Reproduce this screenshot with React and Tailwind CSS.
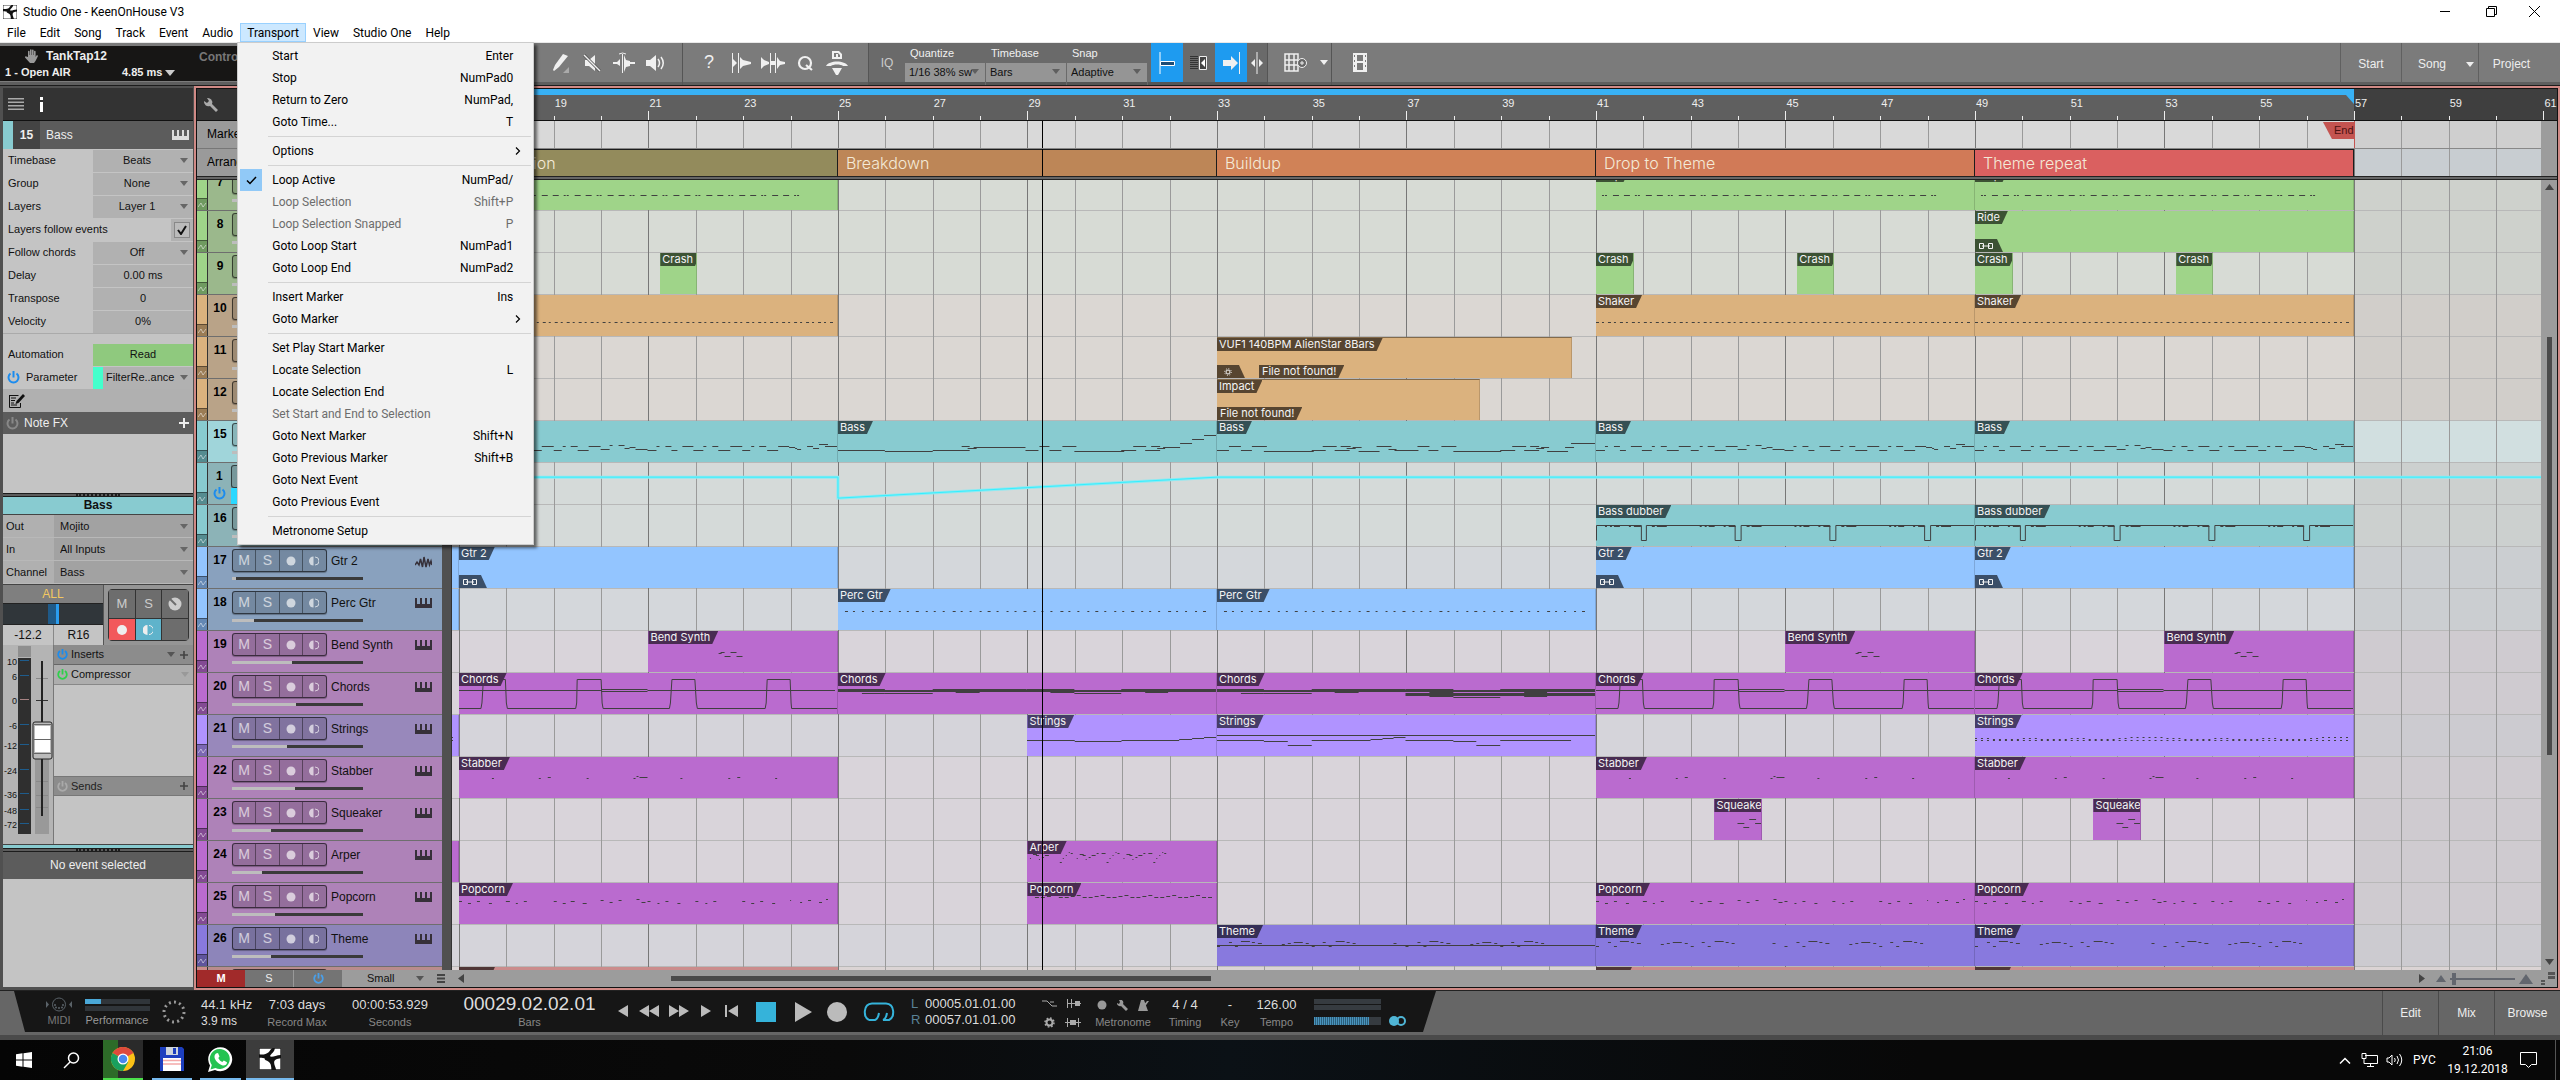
import { Fragment } from "react";
import clsx from "clsx";

const FIRST_BAR = 16.853;
const SPAN = 44.095;
const BARS = Array.from({ length: 44 }, (_, i) => i + 17);

const at = (bar) => `${((bar - FIRST_BAR) / SPAN) * 100}%`;
const wide = (bars) => `${(bars / SPAN) * 100}%`;

const MENUS = ["File", "Edit", "Song", "Track", "Event", "Audio", "Transport", "View", "Studio One", "Help"];

const TRANSPORT_MENU = [
  [
    { label: "Start", keys: "Enter" },
    { label: "Stop", keys: "NumPad0" },
    { label: "Return to Zero", keys: "NumPad," },
    { label: "Goto Time...", keys: "T" },
  ],
  [{ label: "Options", sub: true }],
  [
    { label: "Loop Active", keys: "NumPad/", checked: true },
    { label: "Loop Selection", keys: "Shift+P", disabled: true },
    { label: "Loop Selection Snapped", keys: "P", disabled: true },
    { label: "Goto Loop Start", keys: "NumPad1" },
    { label: "Goto Loop End", keys: "NumPad2" },
  ],
  [{ label: "Insert Marker", keys: "Ins" }, { label: "Goto Marker", sub: true }],
  [
    { label: "Set Play Start Marker" },
    { label: "Locate Selection", keys: "L" },
    { label: "Locate Selection End" },
    { label: "Set Start and End to Selection", disabled: true },
    { label: "Goto Next Marker", keys: "Shift+N" },
    { label: "Goto Previous Marker", keys: "Shift+B" },
    { label: "Goto Next Event" },
    { label: "Goto Previous Event" },
  ],
  [{ label: "Metronome Setup" }],
];

const THEMES = {
  green: { strip: "bg-[#9fd489]", auto: "bg-[#6f9a60]", head: "bg-[#9bb88c]", lane: "bg-[#d7dbd5]", tag: "bg-[#3c5234]" },
  orange: { strip: "bg-[#dbb27e]", auto: "bg-[#9b7c55]", head: "bg-[#b9a388]", lane: "bg-[#dbd7d3]", tag: "bg-[#574530]" },
  teal: { strip: "bg-[#88cbd0]", auto: "bg-[#558c90]", head: "bg-[#8cb3b7]", lane: "bg-[#d5dad9]", tag: "bg-[#355054]" },
  tealOn: { strip: "bg-[#88cbd0]", auto: "bg-[#558c90]", head: "bg-[#a0d5da]", lane: "bg-[#dcebeb]", tag: "bg-[#355054]" },
  blue: { strip: "bg-[#93c5ff]", auto: "bg-[#6488b4]", head: "bg-[#89a1be]", lane: "bg-[#d4d7db]", tag: "bg-[#3b4f68]" },
  purple: { strip: "bg-[#ba6bcf]", auto: "bg-[#834a93]", head: "bg-[#ae82b8]", lane: "bg-[#d9d4da]", tag: "bg-[#492c52]" },
  violet: { strip: "bg-[#b093ff]", auto: "bg-[#7b67b3]", head: "bg-[#9888bb]", lane: "bg-[#d5d4da]", tag: "bg-[#463c68]" },
  indigo: { strip: "bg-[#8879de]", auto: "bg-[#5f559c]", head: "bg-[#8d85ba]", lane: "bg-[#d5d4da]", tag: "bg-[#352f57]" },
  red: { strip: "bg-[#cb8c8c]", auto: "bg-[#8f6161]", head: "bg-[#b98c8c]", lane: "bg-[#dbd4d4]", tag: "bg-[#503636]" },
};

// notes are [x, y, length] in clip units, 379 units for eight bars
const path = (notes) => notes.map(([x, y, w]) => `M${x} ${y + 0.5}h${w}`).join("");
const shift = (notes, dx) => notes.map(([x, y, w]) => [x + dx, y, w]);

const bassRiff = [
  [0, 29, 9], [9, 25, 3], [18, 25, 6], [24, 29, 6], [35, 25, 11], [46, 29, 10], [56, 25, 3], [65, 25, 6], [71, 29, 12],
  [83, 25, 12], [95, 29, 8], [104, 25, 3], [112, 25, 7],
];
const bassVerse = path([
  ...bassRiff, [119, 29, 11], [130, 25, 12], [142, 28, 9], [151, 24, 3], [160, 24, 6], [166, 27, 5], [171, 26, 6], [177, 28, 12],
  ...shift(bassRiff, 189), [309, 29, 11], [320, 25, 11], [331, 26, 6], [337, 27, 2], [339, 28, 4], [349, 25, 6], [355, 27, 6],
  [361, 23, 9], [367, 25, 12],
]);
const bassBreak = path([
  [0, 29, 47], [47, 30, 48], [95, 29, 37], [124, 25, 8], [130, 27, 9], [136, 26, 52], [188, 29, 13], [202, 25, 10], [212, 29, 12],
  [225, 25, 14], [237, 30, 50], [284, 29, 15], [296, 25, 13], [308, 29, 15], [314, 25, 9], [320, 27, 8], [326, 26, 17],
  [343, 22, 12], [355, 18, 12], [367, 14, 12],
]);
const bassBuild = path([
  [0, 29, 12], [12, 25, 12], [24, 29, 11], [35, 25, 15], [47, 30, 50], [95, 29, 14], [106, 25, 14], [118, 29, 15], [124, 25, 10],
  [130, 27, 9], [136, 26, 9], [142, 30, 21], [160, 25, 15], [172, 28, 8], [178, 29, 24], [201, 25, 12], [212, 29, 10],
  [225, 25, 15], [237, 30, 48], [284, 29, 15], [296, 25, 14], [308, 29, 15], [314, 25, 9], [320, 27, 8], [325, 26, 8],
  [331, 30, 21], [349, 26, 9], [355, 22, 24],
]);
const dubber =
  "M.5 35.5V20.5H45.5V35.5H50.5V20.5H139.5V35.5H145.5V20.5H234.5V35.5H240.5V20.5H329.5V35.5H335.5V20.5H379" +
  path([0, 95, 190, 285].flatMap((x) => [[x + 9, 21, 2], [x + 14, 21, 2], [x + 18, 21, 6], [x + 33, 21, 2], [x + 38, 21, 7], [x + 56, 21, 3], [x + 61, 21, 10]]));
const bend = path([[71, 22, 3], [73, 21, 4], [77, 25, 6], [83, 21, 6], [89, 25, 6]]);
const chordsVerse =
  "M0 35.5H22L23 30L24.5 6.5H46.5L47.5 30L48.5 35.5H117L118 30L118.5 6.5H142.5L143.5 30L144.5 35.5H211L212 30L213.5 6.5H236.5L238 30L239 35.5H307L308 30L309 6.5H332L333 30L333.5 35.5H379" +
  path([[0, 17, 143], [143, 16, 46], [143, 18, 46], [189, 17, 188]]);
const chordsBreak = path([
  [0, 16, 47], [0, 17, 379], [0, 18, 379], [24, 20, 23], [47, 18, 48], [47, 20, 48], [95, 16, 94], [118, 19, 24],
  [189, 16, 48], [213, 19, 24], [237, 20, 47], [237, 18, 47], [284, 16, 95], [308, 19, 23],
]);
const chordsBuild = chordsBreak + path([[189, 20, 190], [189, 21, 190], [189, 22, 190], [213, 23, 24], [237, 24, 47], [308, 23, 23]]);
const stringsA = path([[0, 25, 48], [48, 26, 47], [95, 25, 58], [153, 24, 13], [166, 23, 12], [178, 22, 12]]);
const stringsB = path([
  [0, 20, 379], [0, 25, 47], [47, 26, 24], [71, 30, 24], [95, 25, 59], [154, 24, 12], [166, 23, 11], [177, 22, 12],
  [189, 25, 48], [237, 26, 23], [260, 30, 24], [284, 25, 71],
]);
const stringsC = path(
  Array.from({ length: 63 }, (_, i) => [i * 6, 25, 2]).concat(
    Array.from({ length: 63 }, (_, i) => [i * 6, i % 32 > 25 ? 22 : i % 8 < 3 ? 23 : 24, 2])
  )
);
const stabber = path([
  [33, 21, 2], [80, 21, 2], [89, 20, 3], [128, 21, 2], [175, 21, 2], [178, 19, 2], [181, 20, 8], [222, 21, 2], [270, 21, 2],
  [279, 20, 3], [317, 21, 2],
]);
const squeaker = path([[24, 24, 7], [30, 28, 6], [36, 20, 7], [42, 24, 6]]);
const arper = path(
  [0, 47, 94].flatMap((x) => [
    [x + 3, 17, 1], [x + 6, 13, 4], [x + 9, 14, 3], [x + 12, 18, 1], [x + 15, 16, 2], [x + 18, 14, 4], [x + 23, 12, 2],
    [x + 28, 12, 4], [x + 33, 21, 2], [x + 36, 17, 1], [x + 39, 14, 1], [x + 42, 11, 1], [x + 44, 12, 2],
  ])
);
const popcornA = path([
  [0, 18, 3], [9, 20, 3], [18, 18, 3], [30, 20, 3], [47, 18, 4], [57, 20, 2], [65, 18, 3], [95, 18, 3], [104, 20, 3],
  [112, 18, 4], [124, 20, 4], [142, 17, 3], [151, 19, 3], [160, 17, 3], [178, 16, 3], [183, 19, 4], [189, 18, 3],
  [199, 20, 2], [207, 18, 3], [219, 20, 3], [237, 18, 3], [247, 20, 2], [255, 18, 3], [284, 18, 3], [293, 20, 3],
  [302, 18, 3], [314, 20, 3], [332, 17, 1], [342, 19, 2], [350, 17, 3], [361, 19, 3], [368, 16, 2],
]);
const popcornB = path(Array.from({ length: 31 }, (_, i) => [i * 6 + 2, 12 + ((i * 3) % 4 > 1 ? 2 : i % 2), 4]));
const themeRiff = [
  [0, 21, 3], [12, 17, 3], [18, 21, 3], [24, 16, 9], [35, 17, 3], [41, 18, 4], [65, 19, 3], [71, 18, 3], [77, 17, 9], [89, 18, 3],
  [95, 21, 3], [106, 17, 3], [112, 21, 3], [119, 16, 9], [130, 17, 3], [136, 18, 3],
];
const theme = path([...themeRiff, [177, 18, 3], ...shift(themeRiff, 189)]);
const themeHeld = theme + "M0 20.5H379";
const hats = path(Array.from({ length: 31 }, (_, i) => (i % 3 ? [[i * 11 + 6, 26, 6]] : [[i * 11 + 6, 26, 2], [i * 11 + 9, 26, 2]])).flat());
const shaker = path(Array.from({ length: 63 }, (_, i) => [i * 6, 27, i % 2 ? 2 : 3]));
const perc = path(Array.from({ length: 41 }, (_, i) => [i * 9 + 6 + (i % 3 ? 0 : 1), 22, i % 4 ? 2 : 3]));

const verse = (name, notes) => [
  { name, from: 17, to: 25, notes },
  { name, from: 41, to: 49, notes },
  { name, from: 49, to: 57, notes },
];

const TRACKS = [
  { num: 7, name: "Clap", theme: "green", vol: 40, clips: verse("Clap", hats) },
  { num: 8, name: "Ride", theme: "green", vol: 40, clips: [{ name: "Ride", from: 49, to: 57, badge: "link" }] },
  {
    num: 9, name: "Crash", theme: "green", vol: 40,
    clips: [
      { name: "Crash", from: 21.25, to: 22.02 },
      { name: "Crash", from: 41, to: 41.8 },
      { name: "Crash", from: 45.25, to: 46.02 },
      { name: "Crash", from: 49, to: 49.8 },
      { name: "Crash", from: 53.25, to: 54.02 },
    ],
  },
  { num: 10, name: "Shaker", theme: "orange", vol: 40, clips: verse("Shaker", shaker) },
  { num: 11, name: "FX", theme: "orange", vol: 40, clips: [{ name: "VUF1 140BPM AlienStar 8Bars", from: 33, to: 40.5, badge: "gear", missing: true, audio: true }] },
  { num: 12, name: "Impact", theme: "orange", vol: 40, clips: [{ name: "Impact", from: 33, to: 38.56, missing: true, audio: true }] },
  {
    num: 15, name: "Bass", theme: "tealOn", vol: 45,
    clips: [
      { name: "Bass", from: 17, to: 25, notes: bassVerse },
      { name: "Bass", from: 25, to: 33, notes: bassBreak },
      { name: "Bass", from: 33, to: 41, notes: bassBuild },
      { name: "Bass", from: 41, to: 49, notes: bassVerse },
      { name: "Bass", from: 49, to: 57, notes: bassVerse },
    ],
  },
  { num: 1, name: "FilterResonance", theme: "teal", automation: true, clips: [] },
  { num: 16, name: "Bass dubber", theme: "teal", vol: 40, clips: verse("Bass dubber", dubber).slice(1) },
  {
    num: 17, name: "Gtr 2", theme: "blue", vol: 3, wave: true,
    clips: [
      { from: 9, to: 17 },
      { name: "Gtr 2", from: 17, to: 25, badge: "link" },
      { name: "Gtr 2", from: 41, to: 49, badge: "link" },
      { name: "Gtr 2", from: 49, to: 57, badge: "link" },
    ],
  },
  {
    num: 18, name: "Perc Gtr", theme: "blue", vol: 17,
    clips: [
      { from: 9, to: 17, notes: perc },
      { name: "Perc Gtr", from: 25, to: 33, notes: perc },
      { name: "Perc Gtr", from: 33, to: 41, notes: perc },
    ],
  },
  {
    num: 19, name: "Bend Synth", theme: "purple", vol: 46,
    clips: [
      { name: "Bend Synth", from: 21, to: 25, notes: bend },
      { name: "Bend Synth", from: 45, to: 49, notes: bend },
      { name: "Bend Synth", from: 53, to: 57, notes: bend },
    ],
  },
  {
    num: 20, name: "Chords", theme: "purple", vol: 49,
    clips: [
      { name: "Chords", from: 17, to: 25, notes: chordsVerse },
      { name: "Chords", from: 25, to: 33, notes: chordsBreak },
      { name: "Chords", from: 33, to: 41, notes: chordsBuild },
      { name: "Chords", from: 41, to: 49, notes: chordsVerse },
      { name: "Chords", from: 49, to: 57, notes: chordsVerse },
    ],
  },
  {
    num: 21, name: "Strings", theme: "violet", vol: 42,
    clips: [
      { from: 9, to: 17, notes: stringsC },
      { name: "Strings", from: 29, to: 33, notes: stringsA },
      { name: "Strings", from: 33, to: 41, notes: stringsB },
      { name: "Strings", from: 49, to: 57, notes: stringsC },
    ],
  },
  { num: 22, name: "Stabber", theme: "purple", vol: 48, clips: verse("Stabber", stabber) },
  {
    num: 23, name: "Squeaker", theme: "purple", vol: 30,
    clips: [
      { name: "Squeaker", from: 43.5, to: 44.5, notes: squeaker },
      { name: "Squeaker", from: 51.5, to: 52.5, notes: squeaker },
    ],
  },
  { num: 24, name: "Arper", theme: "purple", vol: 23, clips: [{ from: 9, to: 17 }, { name: "Arper", from: 29, to: 33, notes: arper }] },
  {
    num: 25, name: "Popcorn", theme: "purple", vol: 33,
    clips: [...verse("Popcorn", popcornA), { name: "Popcorn", from: 29, to: 33, notes: popcornB }],
  },
  {
    num: 26, name: "Theme", theme: "indigo", vol: 30,
    clips: [
      { name: "Theme", from: 33, to: 41, notes: themeHeld },
      { name: "Theme", from: 41, to: 49, notes: theme },
      { name: "Theme", from: 49, to: 57, notes: theme },
    ],
  },
];

const NEXT_CLIPS = [17, 41, 49];

const SECTIONS = [
  { name: "Introduction", from: 17, to: 25, color: "bg-[#938b5c]" },
  { name: "Breakdown", from: 25, to: 33, color: "bg-[#bd8657]" },
  { name: "Buildup", from: 33, to: 41, color: "bg-[#d08257]" },
  { name: "Drop to Theme", from: 41, to: 49, color: "bg-[#d17a57]" },
  { name: "Theme repeat", from: 49, to: 57, color: "bg-[#da6060]" },
];

function Icon({ w, h, children, className }) {
  return (
    <svg width={w} height={h} viewBox={`0 0 ${w} ${h}`} fill="currentColor" className={clsx("shrink-0", className)} aria-hidden="true">
      {children}
    </svg>
  );
}

const Down = ({ className }) => (
  <Icon w={8} h={5} className={className}>
    <path d="M0 0h8L4 5z" />
  </Icon>
);

const Power = ({ className }) => (
  <Icon w={13} h={13} className={className}>
    <path d="M3.500 2.500a5 5 0 1 0 6 0M6.500 0v6.500" fill="none" stroke="currentColor" strokeWidth="2" />
  </Icon>
);

const SmallPower = ({ className }) => (
  <Icon w={11} h={11} className={className}>
    <path d="M3 2a4.300 4.300 0 1 0 5 0M5.500 0v5.500" fill="none" stroke="currentColor" strokeWidth="1.800" />
  </Icon>
);

const Plus = ({ className }) => (
  <Icon w={10} h={10} className={className}>
    <path d="M4 0h2v4h4v2H6v4H4V6H0V4h4z" />
  </Icon>
);

const Keys = ({ className }) => (
  <Icon w={17} h={10} className={className}>
    <path d="M0 0h2v6h3V0h2v6h3V0h2v6h3V0h2v10H0z" />
  </Icon>
);

const Logo = ({ className }) => (
  <svg viewBox="0 0 16 16" className={className} aria-hidden="true">
    <path d="M0 0h16v16H0z" fill="#fff" stroke="#222" />
    <path d="M0 4.500c3 .5 5 0 7-1.500C8 2 9 0 10 0h1.500c0 3-3 4-3.500 6 2 1 4-1 8-1v2.500c-3 .3-5 1-5 3 0 2 1 3 1.500 5.500H9c0-3-.5-5-2-6C5.500 9 4 9 4 7.500 2.500 7 1 7 0 7z" fill="#111" />
  </svg>
);

function TitleBar() {
  return (
    <div className="flex h-[23px] items-center justify-between bg-white pl-[3px]">
      <div className="flex items-center gap-[6px]">
        <Logo className="h-[14px] w-[14px]" />
        <h1 className="text-[12px]">Studio One - KeenOnHouse V3</h1>
      </div>
      <div className="flex">
        <button aria-label="Minimize" className="grid h-5 w-[46px] place-items-center">
          <Icon w={11} h={11}><path d="M0 5h10v1H0z" /></Icon>
        </button>
        <button aria-label="Restore" className="grid h-5 w-[46px] place-items-center">
          <Icon w={11} h={11}><path d="M.5 2.500h8v8h-8zM2.500 2.500v-2h8v8h-2" fill="none" stroke="currentColor" /></Icon>
        </button>
        <button aria-label="Close" className="grid h-5 w-[46px] place-items-center pr-[6px]">
          <Icon w={11} h={11}><path d="M0 0l11 11M11 0L0 11" fill="none" stroke="currentColor" /></Icon>
        </button>
      </div>
    </div>
  );
}

function TransportMenu() {
  return (
    <div role="menu" className="absolute top-[19px] -left-[3px] z-50 w-[297px] border border-[#ccc] bg-[#f2f2f2] py-[2px] shadow-[3px_3px_3px_rgba(0,0,0,0.55)]">
      {TRANSPORT_MENU.map((group, i) => (
        <Fragment key={i}>
          {i > 0 && <div className="my-[3px] ml-[30px] mr-[2px] h-px bg-[#d4d4d4]" />}
          {group.map((item) => (
            <button
              key={item.label}
              role="menuitem"
              disabled={item.disabled}
              className={clsx("flex h-[22px] w-full items-center pl-[2px] pr-[20px] text-left", item.disabled ? "text-[#6d6d6d]" : "text-black")}
            >
              <span className={clsx("mr-[10px] grid h-[22px] w-[22px] place-items-center", item.checked && "bg-[#91c9f7]")}>
                {item.checked && (
                  <Icon w={11} h={9}><path d="M1 4.500l3 3L10 1" fill="none" stroke="currentColor" strokeWidth="1.500" /></Icon>
                )}
              </span>
              <span className="flex-1">{item.label}</span>
              {item.keys && <span>{item.keys}</span>}
              {item.sub && (
                <Icon w={6} h={8} className="mr-[-8px]"><path d="M1 .5L4.500 4 1 7.500" fill="none" stroke="currentColor" strokeWidth="1.200" /></Icon>
              )}
            </button>
          ))}
        </Fragment>
      ))}
    </div>
  );
}

function MenuBar() {
  return (
    <nav className="flex h-5 border-b border-[#e8e8e8] bg-white text-[12px] leading-[18px]">
      {MENUS.map((m) => (
        <div key={m} className="relative">
          <button className={clsx("h-[19px] border px-[6px]", m === "Transport" ? "border-[#99d1ff] bg-[#cce8ff]" : "border-transparent")}>{m}</button>
          {m === "Transport" && <TransportMenu />}
        </div>
      ))}
    </nav>
  );
}

function Tool({ label, on, className = "w-8", children }) {
  return (
    <button aria-label={label} className={clsx("grid h-[39px] place-items-center text-[#f0f0f0]", className, on && "bg-[#1e9bf0]")}>
      {children}
    </button>
  );
}

function ToolSelect({ label, value }) {
  return (
    <label className="relative flex w-[81px] flex-col border-r border-[#6a6a6a] text-[11px]">
      <span className="h-5 pl-[5px] leading-5 text-[#f0f0f0]">{label}</span>
      <select className="h-[19px] w-20 appearance-none bg-[#959595] pl-1 text-[#111]">
        <option>{value}</option>
      </select>
      <Down className="absolute right-[6px] bottom-[11px] text-[#5f5f5f]" />
    </label>
  );
}

function Toolbar() {
  return (
    <header className="flex h-[43px] shrink-0 border-b border-[#1c1c1c] bg-[linear-gradient(#7b7b7b_39px,#5e5e5e_39px)] text-[11px] text-[#eee]">
      <div className="mt-[3px] flex h-[35px] w-[330px] shrink-0 bg-[#171615] font-bold">
        <div className="w-[199px] pl-[5px]">
          <div className="flex h-[20px] items-center gap-2 pl-5 text-[12px]">
            <Icon w={13} h={14} className="text-[#999]">
              <path d="M3 8V2.500a.8.8 0 0 1 1.600 0V6h.4V1a.8.8 0 0 1 1.600 0v5H7V1.200a.8.8 0 0 1 1.600 0V6H9V2.500a.8.8 0 0 1 1.600 0V8l.8-1.500a.9.9 0 0 1 1.500.8L10.500 12 9 14H5L0 8.500a.9.9 0 0 1 1.400-1z" />
            </Icon>
            TankTap12
          </div>
          <div className="flex h-[13px] items-center">
            <span className="w-[117px]">1 - Open AIR</span>
            <span className="mr-[3px]">4.85 ms</span>
            <Icon w={10} h={6} className="text-[#ccc]"><path d="M0 0h10L5 6z" /></Icon>
          </div>
        </div>
        <span className="pt-[2px] text-[12px] text-[#777]">Control Link</span>
      </div>
      <div className="w-[214px] shrink-0" />

      <div className="flex w-[138px] shrink-0">
        <Tool label="Paint"><Icon w={18} h={20}><path d="M12 1l5 2-9 11-5 4-1-1 2-5z" /><path d="M18 14v6h-6z" fill="#aaa" /></Icon></Tool>
        <Tool label="Mute"><Icon w={18} h={18}><path d="M2 6h4l6-5v16l-6-5H2z" /><path d="M1 1l16 16" stroke="#555" strokeWidth="3" /><path d="M1 1l16 16" stroke="currentColor" strokeWidth="1.500" /></Icon></Tool>
        <Tool label="Bend"><Icon w={22} h={22}><path d="M0 10h4l3-3v7l-3-2H0zM11 3l2 5 4 1v1h5v2h-5v2l-4 1-2 5z" /><path d="M9.500 2v19M6 2l3.500-1L13 2" stroke="currentColor" fill="none" /></Icon></Tool>
        <Tool label="Listen"><Icon w={20} h={18}><path d="M0 6h4l6-5v16l-6-5H0z" /><path d="M12 5q3 4 0 8M15 3q4.500 6 0 12" fill="none" stroke="currentColor" strokeWidth="1.500" /></Icon></Tool>
      </div>
      <div className="flex w-[186px] shrink-0 border-l border-[#555] pl-[10px]">
        <Tool label="Help"><span className="text-[18px]">?</span></Tool>
        <Tool label="Strip silence"><Icon w={20} h={22}><path d="M1 1h1v20H1zM7 1h1v20H7zM2 7l4 4-4 4zM9 5l3 3 4 1 4 1v2l-4 1-4 1-3 3z" /></Icon></Tool>
        <Tool label="Audio bend"><Icon w={24} h={22}><path d="M0 5l3 3 5 2v2l-5 2-3 3zM9 1h1v20H9zM14 1h1v20h-1zM10 9h4v4h-4zM16 5l3 4 5 1v2l-5 1-3 4z" /></Icon></Tool>
        <Tool label="Quantize"><Icon w={17} h={18}><circle cx="8" cy="9" r="6" fill="none" stroke="currentColor" strokeWidth="2.200" /><path d="M9 11l6 5" stroke="currentColor" strokeWidth="2.200" /></Icon></Tool>
        <Tool label="Macro"><Icon w={22} h={24}><path d="M6 0h7l3 3v5H6zM8 2v4h2V3h2v3h2V4l-2-2zM0 15C3 9 19 9 22 15h-5c-2-2-10-2-12 0zM6 17h10l-4 7h-2z" fillRule="evenodd" /></Icon></Tool>
      </div>
      <div className="flex w-[399px] shrink-0 border-l border-[#555] bg-[linear-gradient(#6a6a6a_39px,#555_39px)]">
        <Tool label="Input quantize" className="w-9"><span className="text-[12px] text-[#ccc]">IQ</span></Tool>
        <ToolSelect label="Quantize" value="1/16 38% sw" />
        <ToolSelect label="Timebase" value="Bars" />
        <ToolSelect label="Snap" value="Adaptive" />
        <div className="w-[3px]" />
        <Tool label="Snap to grid" on><Icon w={17} h={22}><path d="M1 0v22" stroke="#fff" /><path d="M1.500 9.500h14v4h-14z" stroke="#fff" fill="#1d4c74" /></Icon></Tool>
        <Tool label="Ripple"><Icon w={18} h={14}><path d="M1 0v14M3 0v14M5 0v14M7 0v14" stroke="#222" strokeDasharray="1 1" strokeWidth="1.500" /><path d="M9.500 .5h7v13h-7z" stroke="#eee" fill="#444" /><path d="M15 3v8l-4-4z" fill="#fff" /></Icon></Tool>
        <Tool label="Autoscroll" on><Icon w={19} h={22}><path d="M1 8h8V4l7 7-7 7v-4H1zM17 0h1v22h-1z" /></Icon></Tool>
        <Tool label="Cursor follows" className="w-5"><Icon w={12} h={22}><path d="M5.500 0h1v22h-1zM4 7v8L0 11zM8 7v8l4-4z" /></Icon></Tool>
      </div>
      <div className="flex w-16 shrink-0 border-l border-[#555] pl-4">
        <Tool label="Grid view" className="w-6"><Icon w={24} h={19}><path d="M1 1h13v17H1zM1 7h13M1 12h13M5 1v17M10 1v17" fill="none" stroke="currentColor" strokeWidth="1.500" /><circle cx="18" cy="10" r="4.500" fill="#666" stroke="currentColor" /><path d="M18 8v4M16 10h4" stroke="currentColor" /></Icon></Tool>
        <Tool label="Grid options" className="ml-2 w-4"><Down /></Tool>
      </div>
      <div className="flex flex-1 border-l border-[#555] pl-3">
        <Tool label="Video"><Icon w={14} h={19}><path d="M0 0h14v19H0zM4 2v6h6V2zM4 10v7h6v-7zM1 2v2h1V2zM1 7v2h1V7zM1 12v2h1v-2zM12 2v2h1V2zM12 7v2h1V7zM12 12v2h1v-2z" fillRule="evenodd" /></Icon></Tool>
      </div>
      <div className="flex text-[12px]">
        <button className="w-[61px] border-l border-[#606060]">Start</button>
        <button className="flex w-[77px] items-center justify-between border-l border-[#606060] pl-4 pr-1">Song <Down /></button>
        <button className="w-[82px] border-l border-[#606060] pr-4">Project</button>
      </div>
    </header>
  );
}

function InspectorRow({ label, value, select, children }) {
  return (
    <label className="flex h-[23px] items-center pl-[5px]">
      <span className="flex-1">{label}</span>
      {children}
      {value && (
        <span className="relative flex h-[22px] w-[100px] items-center bg-[#b1b1b1]">
          {select ? (
            <>
              <select className="h-full w-full appearance-none bg-transparent pr-3 text-center [text-align-last:center]"><option>{value}</option></select>
              <Down className="absolute right-[5px] text-[#666]" />
            </>
          ) : (
            <input className="w-full bg-transparent text-center" defaultValue={value} />
          )}
        </span>
      )}
    </label>
  );
}

function RouteRow({ label, value }) {
  return (
    <label className="relative flex h-[23px] items-center border-b border-[#b8b8b8] bg-[#b0b0b0]">
      <span className="w-[51px] pl-[3px]">{label}</span>
      <select className="h-[22px] flex-1 appearance-none bg-[#a2a2a2] pl-[6px]"><option>{value}</option></select>
      <Down className="absolute right-[5px] text-[#666]" />
    </label>
  );
}

const Splitter = () => (
  <div className="flex h-1 shrink-0 justify-center border-y border-[#1c1c1c] bg-[#5c5c5c]">
    <div className="w-11 border-b-2 border-dotted border-[#1c1c1c]" />
  </div>
);

const SCALE = [["10", 16], ["6", 31], ["0", 55], ["-6", 80], ["-12", 100], ["-24", 125], ["-36", 149], ["-48", 165], ["-72", 179]];

function Fader() {
  return (
    <div className="relative w-[51px] border-r border-[#777] bg-[#b4b4b4]">
      <svg width="50" height="199" className="block" aria-hidden="true">
        <rect x="15" y="1" width="13" height="11" fill="#8f8f8f" />
        <rect x="15" y="13" width="13" height="176" fill="#2f2f2f" />
        <rect x="32" y="110" width="14" height="79" fill="#999" />
        {SCALE.map(([t, y]) => (
          <g key={t}>
            <path d={`M17 ${y - 0.500}h9`} stroke={t === "0" ? "#a78383" : "#1e5c8c"} />
            <text x="14" y={y + 4} textAnchor="end" fontSize="9" fill="#111">{t}</text>
          </g>
        ))}
        <path d="M33 33.500h12M33 136.500h12M33 150.500h12M33 162.500h12" stroke="#888" />
        <path d="M33 55.500h12" stroke="#333" />
        <path d="M39 16v155" stroke="#222" strokeWidth="2" />
        <rect x="30" y="77" width="19" height="37" rx="2" fill="#bbb" stroke="#222" />
        <rect x="32" y="81" width="15" height="26" fill="#fff" />
        <path d="M31 94.500h17M31 79.500h17M31 108.500h17" stroke="#666" />
      </svg>
      <input type="range" aria-label="Channel volume" className="absolute inset-0 h-full w-full opacity-0" />
    </div>
  );
}

function Inspector() {
  return (
    <aside className="mt-[2px] mb-[3px] ml-[3px] mr-px flex w-[190px] shrink-0 flex-col bg-[#c4c4c4] text-[11px] text-[#111]">
      <div className="flex h-[33px] items-center gap-4 border-b border-[#111] bg-[#333] pl-[5px]">
        <Icon w={16} h={12} className="text-[#aaa]"><path d="M0 0h16v1.500H0zM0 3.500h16V5H0zM0 7h16v1.500H0zM0 10.500h16V12H0z" /></Icon>
        <Icon w={3} h={15} className="text-white"><path d="M0 0h3v3H0zM0 5h3v10H0z" /></Icon>
      </div>
      <div className="flex h-7 items-center bg-[#5c5c5c] text-[12px] text-[#eee]">
        <span className="h-full w-[10px] bg-[#88cbd0]" />
        <b className="grid h-full w-[27px] place-items-center bg-[#444]">15</b>
        <span className="flex-1 pl-[6px]">Bass</span>
        <Keys className="mr-1 text-[#ddd]" />
      </div>
      <InspectorRow label="Timebase" value="Beats" select />
      <InspectorRow label="Group" value="None" select />
      <InspectorRow label="Layers" value="Layer 1" select />
      <InspectorRow label="Layers follow events">
        <span className="relative grid h-[22px] w-[22px] place-items-center bg-[#b1b1b1]">
          <input type="checkbox" defaultChecked className="h-4 w-4 appearance-none border border-[#888] bg-[#bbb]" />
          <Icon w={10} h={10} className="absolute"><path d="M1 5l3 4 5-8" fill="none" stroke="#111" strokeWidth="2" /></Icon>
        </span>
      </InspectorRow>
      <InspectorRow label="Follow chords" value="Off" select />
      <InspectorRow label="Delay" value="0.00 ms" />
      <InspectorRow label="Transpose" value="0" />
      <InspectorRow label="Velocity" value="0%" />
      <div className="h-[10px] border-t border-[#aaa]" />
      <div className="flex h-[23px] items-center justify-between pl-[5px]">
        Automation
        <button className="h-[22px] w-[100px] bg-[#8fc97e]">Read</button>
      </div>
      <label className="relative flex h-[23px] items-center pl-1">
        <Power className="mr-[6px] text-[#1c8cee]" />
        <span className="flex-1">Parameter</span>
        <span className="h-[22px] w-[10px] bg-[#44ffcc]" />
        <select className="h-[22px] w-[90px] appearance-none bg-[#b1b1b1] pl-[3px]"><option>FilterRe..ance</option></select>
        <Down className="absolute right-[5px] text-[#666]" />
      </label>
      <div className="flex h-[23px] items-center bg-[#b0b0b0] pl-[6px]">
        <Icon w={16} h={14}><path d="M.500 1.500h9M.500 1v12.500h11V9M2 4h5M2 6.500h4M2 9h3M2 11h6" fill="none" stroke="currentColor" /><path d="M14 0l2 2-6.500 7-3 1 1-3z" /></Icon>
      </div>
      <div className="flex h-[22px] items-center bg-[#5c5c5c] pl-[3px] pr-1 text-[12px] text-[#eee]">
        <Power className="mr-[5px] text-[#888]" />
        <span className="flex-1">Note FX</span>
        <button aria-label="Add note effect"><Plus /></button>
      </div>
      <div className="h-[59px]" />
      <Splitter />
      <div className="h-[18px] border-b border-[#444] bg-[#88cbd0] text-center text-[12px] leading-[17px] font-bold">Bass</div>
      <RouteRow label="Out" value="Mojito" />
      <RouteRow label="In" value="All Inputs" />
      <RouteRow label="Channel" value="Bass" />
      <div className="flex h-[61px] border-t border-[#444]">
        <div className="w-[101px] border-r border-[#555] text-center">
          <div className="h-[18px] bg-[#7f7f7f] text-[12px] leading-[18px] text-[#f3c860]">ALL</div>
          <div className="relative h-[22px] border-y border-[#222] bg-[#30363a]">
            <div className="mx-auto h-full w-[11px] border-r-[3px] border-[#2a9df0] bg-[#1f5a88]" />
            <input type="range" aria-label="Pan" className="absolute inset-0 h-full w-full opacity-0" />
          </div>
          <div className="flex h-5 text-[12px] leading-5">
            <span className="w-[51px] border-r border-[#888]">-12.2</span>
            <span className="flex-1">R16</span>
          </div>
        </div>
        <div className="flex-1 bg-[#959595] p-1">
          <div className="grid h-[52px] w-[81px] grid-cols-3 gap-px rounded-sm border border-[#333] bg-[#333] text-[13px] text-[#ccc]">
            <button className="bg-[#6d6d6d]">M</button>
            <button className="bg-[#6d6d6d]">S</button>
            <button aria-label="Monitor dim" className="grid place-items-center bg-[#6d6d6d]"><Icon w={14} h={14}><circle cx="7" cy="7" r="6.500" /><path d="M2 2l6 6" stroke="#6d6d6d" strokeWidth="2" /></Icon></button>
            <button aria-label="Record arm" className="grid place-items-center bg-[#f2595b]"><Icon w={10} h={10}><circle cx="5" cy="5" r="5" fill="#eee" /></Icon></button>
            <button aria-label="Monitor" className="grid place-items-center bg-[#5fb3cb]"><Icon w={10} h={12}><path d="M4.500 1v10a5 5 0 0 1 0-10z" fill="#eee" /><path d="M6 1.500a4.500 4.500 0 0 1 0 9" fill="none" stroke="#eee" /></Icon></button>
            <button aria-label="Channel editor" className="bg-[#6d6d6d]" />
          </div>
        </div>
      </div>
      <div className="flex h-[200px] border-b border-[#444]">
        <Fader />
        <div className="flex-1">
          <div className="flex h-5 items-center border-b border-[#666] bg-[#8c8c8c] pl-[3px] pr-1">
            <SmallPower className="mr-[3px] text-[#1c8cee]" />
            <span className="flex-1">Inserts</span>
            <Down className="mr-1 text-[#555]" />
            <button aria-label="Add insert" className="text-[#444]"><Plus className="h-2" /></button>
          </div>
          <div className="flex h-5 items-center border-b border-[#888] bg-[#adadad] pl-[3px] pr-1">
            <SmallPower className="mr-[3px] text-[#2fd04c]" />
            <span className="flex-1">Compressor</span>
            <Down className="text-[#999]" />
          </div>
          <div className="h-[91px]" />
          <div className="flex h-5 items-center border-y border-[#777] bg-[#8c8c8c] pl-[3px] pr-1 text-[#222]">
            <SmallPower className="mr-[3px] text-[#aaa]" />
            <span className="flex-1">Sends</span>
            <button aria-label="Add send" className="text-[#444]"><Plus className="h-2" /></button>
          </div>
        </div>
      </div>
      <div className="h-[3px] bg-[#88cbd0]" />
      <Splitter />
      <div className="h-[27px] bg-[#5c5c5c] text-center text-[12px] leading-[27px] text-[#eee]">No event selected</div>
    </aside>
  );
}

function TrackHeader({ track }) {
  const t = THEMES[track.theme];
  return (
    <li className={clsx("flex h-[42px] shrink-0 border-b border-[#6e6e6e]", t.head)}>
      <div className={clsx("flex w-[11px] flex-col justify-end border-r border-[#333]", t.strip)}>
        <div className={clsx("grid h-3 place-items-center border-t border-black/40 text-white/50", t.auto)}>
          <Icon w={9} h={8}><path d="M0 6l3-4 2 4 3-4" fill="none" stroke="currentColor" /></Icon>
        </div>
      </div>
      <div className="w-6 pt-1 text-center">
        <b className="block text-[12px] leading-[18px]">{track.num}</b>
        {track.automation && <Power className="mx-auto mt-[2px] text-[#1c8cee]" />}
      </div>
      <div className="w-[99px] pt-[2px]">
        <div className="grid h-[23px] w-[95px] grid-cols-4 divide-x divide-black/40 rounded-[3px] border border-black/60 bg-black/15 text-[14px] text-white/65 shadow-[0_1px_1px_rgba(0,0,0,0.3)]">
          <button aria-label={`Mute ${track.name}`}>M</button>
          <button aria-label={`Solo ${track.name}`}>S</button>
          <button aria-label={`Arm ${track.name}`} className="grid place-items-center"><Icon w={10} h={10}><circle cx="5" cy="5" r="4.500" /></Icon></button>
          <button aria-label={`Monitor ${track.name}`} className="grid place-items-center"><Icon w={10} h={10}><path d="M4.500.5v9a4.500 4.500 0 0 1 0-9z" /><path d="M6 1a4 4 0 0 1 0 8" fill="none" stroke="currentColor" /></Icon></button>
        </div>
        {track.automation ? (
          <div className="h-4 w-[95px] bg-[#2bd8ff]" />
        ) : (
          <div className="relative mt-[5px] h-[3px] w-[131px] bg-[#3a3a3a]">
            <div className="h-full bg-[#bdbdbd]" style={{ width: `${track.vol}%` }} />
            <input type="range" aria-label={`Volume ${track.name}`} defaultValue={track.vol} className="absolute inset-0 h-full w-full opacity-0" />
          </div>
        )}
      </div>
      <span className="flex-1 pt-[5px] text-[12px] leading-[18px] text-[#111]">{track.name}</span>
      <span className="pt-[9px] pr-[10px] text-[#363039]">
        {track.wave ? (
          <Icon w={17} h={12}><path d="M0 9l2-3 2 3 1.500-6L7.500 11l1.500-10 2 10L13 3l1.500 6L16 5l1 4" fill="none" stroke="currentColor" strokeWidth="1.500" /></Icon>
        ) : (
          <Keys />
        )}
      </span>
    </li>
  );
}

const TAG = "[clip-path:polygon(0_0,100%_0,calc(100%-6px)_100%,0_100%)]";
const FOOT = "[clip-path:polygon(0_0,calc(100%-6px)_0,100%_100%,0_100%)]";

function Clip({ clip, theme }) {
  const t = THEMES[theme];
  const units = (clip.to - clip.from) * 47.375;
  return (
    <div
      className={clsx("absolute top-0 z-20 flex h-[41px] flex-col justify-between overflow-hidden border-r border-black/15 text-[11px] leading-[13px] text-[#f4f4f4]", t.strip, clip.audio && "border-t border-t-black/40")}
      style={{ left: at(clip.from), width: wide(clip.to - clip.from) }}
    >
      {clip.notes && (
        <svg className="absolute inset-0 h-full w-full" viewBox={`0 0 ${units} 41`} preserveAspectRatio="none" aria-hidden="true">
          <path d={clip.notes} fill="none" stroke="#3f3f3f" strokeWidth="1" />
        </svg>
      )}
      {clip.name && <span className={clsx("relative h-[13px] w-max pl-[2px] pr-[8px] font-[Inter,sans-serif]", t.tag, TAG)}>{clip.name}</span>}
      {(clip.badge || clip.missing) && (
        <span className="flex items-end gap-[14px]">
          {clip.badge && (
            <span className={clsx("grid h-[13px] w-7 place-items-center pr-[6px]", t.tag, FOOT)}>
              {clip.badge === "link" ? (
                <Icon w={14} h={6}><path d="M.5.5h4v5h-4zM9.500.5h4v5h-4zM3 3h8" fill="none" stroke="currentColor" /></Icon>
              ) : (
                <Icon w={8} h={8}><circle cx="4" cy="4" r="2" fill="none" stroke="currentColor" /><circle cx="4" cy="4" r="3.300" fill="none" stroke="currentColor" strokeDasharray="1 1.600" /></Icon>
              )}
            </span>
          )}
          {clip.missing && <span className={clsx("h-[13px] pl-[3px] pr-[8px] font-[Inter,sans-serif]", t.tag, TAG)}>File not found!</span>}
        </span>
      )}
    </div>
  );
}

const Grid = () => (
  <div className="pointer-events-none absolute inset-0 z-10 overflow-hidden">
    {BARS.map((bar) => (
      <div key={bar} className={clsx("absolute inset-y-0 w-px", bar % 4 === 1 ? "bg-[#777]" : "bg-[#9a9a9a]")} style={{ left: at(bar) }} />
    ))}
  </div>
);

const AfterEnd = ({ className }) => <div className={clsx("absolute inset-y-0 right-0", className)} style={{ left: at(57) }} />;

const Playhead = () => <div className="absolute inset-y-0 z-30 w-px bg-black" style={{ left: at(29.3) }} />;

function Automation() {
  const end = FIRST_BAR + SPAN;
  const d = `M${FIRST_BAR} 14.500H25V36L33 14.500H${end}`;
  return (
    <svg className="absolute inset-0 z-20 h-full w-full" viewBox={`${FIRST_BAR} 0 ${SPAN} 42`} preserveAspectRatio="none" fill="none" aria-hidden="true">
      <path d={d} stroke="#8eeaf2" strokeWidth="3" vectorEffect="non-scaling-stroke" />
      <path d={d} stroke="#34efff" strokeWidth="1" vectorEffect="non-scaling-stroke" />
    </svg>
  );
}

function Ruler() {
  return (
    <div className="flex flex-1 border-b border-[#111] bg-[#3f3f3f] text-[11px] text-[#eee]">
      <div className="relative flex-1">
        <div className="absolute inset-y-0 left-0 bg-[#5f5f5f]" style={{ right: `calc(100% - ${at(57)})` }}>
          <div className="h-[6px] bg-[#38b1f5]" />
          <div className="ml-auto h-[9px] w-2 bg-[#38b1f5] [clip-path:polygon(0_0,100%_0,100%_100%)]" />
        </div>
        {[...BARS, 61].map((bar) => (
          <div key={bar} className="absolute inset-y-0 flex flex-col justify-end" style={{ left: at(bar) }}>
            {bar % 2 === 1 && <span className="absolute top-[7px] left-px leading-[14px]">{bar}</span>}
            <span className={clsx("w-px bg-[#eee]", bar % 4 === 1 ? "h-[9px]" : "h-1")} />
          </div>
        ))}
      </div>
      <div className="w-4" />
    </div>
  );
}

function ArrangeHeader() {
  return (
    <>
      <div className="flex h-8 shrink-0">
        <div className="flex w-[255px] items-center border-b border-[#111] bg-[#333] pl-[6px]">
          <Icon w={15} h={15} className="text-[#aaa]"><path d="M1 4l3 2 2-2-2-3a4.500 4.500 0 0 1 5 6l6 6-2 2-6-6A4.500 4.500 0 0 1 1 4z" /></Icon>
        </div>
        <Ruler />
      </div>
      <div className="flex h-7 shrink-0 text-[12px]">
        <div className="w-[245px] border-b border-[#777] bg-[#9a9a9a] pl-[10px] leading-[27px]">Marker</div>
        <div className="w-[10px] bg-[#505050]" />
        <div className="relative flex-1 border-b border-[#888] bg-[#d9d9d9]">
          <AfterEnd className="bg-[#cfcfcf]" />
          <Grid />
          <Playhead />
          <div className="absolute top-px z-30 h-[17px] w-8 bg-[#c45450] pl-[11px] text-[11px] leading-[17px] text-[#4c1212] [clip-path:polygon(0_0,100%_0,100%_100%,9px_100%)]" style={{ left: `calc(${at(57)} - 31px)` }}>End</div>
          <div className="absolute inset-y-0 z-30 w-px bg-[#c45450]" style={{ left: at(57) }} />
        </div>
        <div className="w-4 bg-[#9c9c9c]" />
      </div>
      <div className="flex h-[27px] shrink-0 text-[12px]">
        <div className="w-[245px] bg-[#9a9a9a] pl-[10px] leading-[27px]">Arranger</div>
        <div className="w-[10px] bg-[#505050]" />
        <div className="relative flex-1 bg-[#c8cdd1]">
          <Grid />
          {SECTIONS.map((s) => (
            <div
              key={s.name}
              className={clsx("absolute inset-y-0 z-20 border-t border-r border-[#1c1c1c] pl-2 font-[Inter,sans-serif] text-[16px] leading-[26px] font-light text-[#f4ead8]", s.color)}
              style={{ left: at(s.from), width: wide(s.to - s.from) }}
            >
              {s.name}
            </div>
          ))}
          <Playhead />
        </div>
        <div className="w-4 bg-[#9c9c9c]" />
      </div>
      <div className="h-1 shrink-0 border-y border-[#222] bg-[#666]" />
    </>
  );
}

function Arrange() {
  return (
    <section className="flex min-w-0 flex-1 border-2 border-[#d08a86]">
      <div className="flex min-w-0 flex-1 flex-col border border-[#111]">
        <ArrangeHeader />
        <div className="flex min-h-0 flex-1">
          <ul className="-mt-[11px] w-[245px] shrink-0 overflow-hidden [clip-path:inset(11px_0_0_0)]">
            {TRACKS.map((track) => (
              <TrackHeader key={track.num} track={track} />
            ))}
            <li className="flex h-[42px] bg-[#b98c8c]">
              <div className="w-[11px] border-r border-[#333] bg-[#cb8c8c]" />
              <div className="mt-[2px] ml-6 h-[23px] w-[95px] rounded-[3px] border border-black/60 bg-black/15" />
            </li>
          </ul>
          <div className="w-[10px] shrink-0 border-r border-[#333] bg-[#505050]" />
          <div className="relative -mt-[11px] min-w-0 flex-1 overflow-hidden [clip-path:inset(11px_0_0_0)]">
            <Grid />
            {TRACKS.map((track) => (
              <div key={track.num} className={clsx("relative h-[42px] border-b border-[#b8b8b8]", THEMES[track.theme].lane)}>
                <AfterEnd className={track.theme === "tealOn" ? "bg-[#d1dfe0]" : "bg-[#202030]/5"} />
                {track.automation && <Automation />}
                {track.clips.map((clip) => (
                  <Clip key={clip.from} clip={clip} theme={track.theme} />
                ))}
              </div>
            ))}
            <div className="relative h-[42px] bg-[#dbd4d4]">
              {NEXT_CLIPS.map((from) => (
                <div key={from} className="absolute top-0 z-20 h-[41px] bg-[#cb8c8c]" style={{ left: at(from), width: wide(8) }}>
                  <div className={clsx("h-[13px] w-9 bg-[#503636]", TAG)} />
                </div>
              ))}
            </div>
            <Playhead />
          </div>
          <div className="flex w-4 shrink-0 flex-col items-center bg-[#9c9c9c] text-[#444]">
            <Icon w={9} h={6} className="mt-1"><path d="M0 6h9L4.500 0z" /></Icon>
            <div className="mt-[147px] h-[418px] w-[5px] bg-[#4a4a4a]" />
            <Icon w={9} h={6} className="mt-auto mb-[5px]"><path d="M0 0h9L4.500 6z" /></Icon>
          </div>
        </div>
        <div className="flex h-[17px] shrink-0 items-center bg-[#9c9c9c] text-[11px] leading-[15px] text-[#444]">
          <button className="h-full w-12 bg-[#a12a2a] font-bold text-white">M</button>
          <button className="h-full w-[49px] border-r border-[#999] bg-[#747474] text-[#eee]">S</button>
          <button aria-label="Automation power" className="grid h-full w-12 place-items-center bg-[#747474] text-[#4a9fe8]"><SmallPower /></button>
          <label className="relative flex w-[95px] items-center pl-[25px] text-[#111]">
            <select aria-label="Track height" className="w-[70px] appearance-none bg-transparent"><option>Small</option></select>
            <Down className="absolute right-[13px] text-[#555]" />
          </label>
          <Icon w={8} h={9}><path d="M0 0h8v2H0zM0 3.500h8v2H0zM0 7h8v2H0z" /></Icon>
          <Icon w={6} h={9} className="ml-[13px]"><path d="M6 0v9L0 4.500z" /></Icon>
          <div className="flex-1 px-[207px]"><div className="h-[5px] w-[540px] bg-[#4a4a4a]" /></div>
          <Icon w={6} h={9}><path d="M0 0v9l6-4.500z" /></Icon>
          <Icon w={10} h={7} className="ml-[11px] text-[#62666e]"><path d="M0 7h10L5 0z" /></Icon>
          <label className="relative mx-1 flex h-full w-[65px] items-center">
            <span className="h-[2px] w-full bg-[#62666e]" />
            <span className="absolute left-[2px] h-3 w-1 bg-[#62666e]" />
            <input type="range" aria-label="Zoom" className="absolute inset-0 h-full w-full opacity-0" />
          </label>
          <Icon w={14} h={10} className="text-[#62666e]"><path d="M0 10h14L7 0z" /></Icon>
          <Icon w={14} h={13} className="ml-2 mr-[2px] text-[#555]"><path d="M7 0h7v3H7zM7 4h7v3H7zM0 8h4v2H0zM0 11h4v2H0z" /></Icon>
        </div>
      </div>
    </section>
  );
}

function Readout({ value, label, className }) {
  return (
    <div className={clsx("flex shrink-0 flex-col items-center", className)}>
      <span className="h-6 text-[13px] leading-7 text-[#ddd]">{value}</span>
      <span className="text-[11px] leading-[14px] text-[#888]">{label}</span>
    </div>
  );
}

function Wind({ label, className, w, d }) {
  return (
    <button aria-label={label} className={clsx("grid h-10 shrink-0 place-items-center", className)}>
      <Icon w={w} h={12}><path d={d} /></Icon>
    </button>
  );
}

function TransportBar() {
  return (
    <footer className="flex h-[50px] shrink-0 border-t border-b-[5px] border-t-[#222] border-b-[#4a4a4a] bg-[#666] text-[12px]">
      <div className="ml-[14px] flex h-[41px] w-[1422px] shrink-0 bg-[#161616] pl-[17px] text-[#ccc] [clip-path:polygon(0_0,100%_0,calc(100%-13px)_100%,11px_100%)]">
        <div className="flex w-14 flex-col items-center pt-[6px] text-[11px] text-[#777]">
          <Icon w={26} h={15} className="text-[#5a6268]">
            <circle cx="13" cy="7.500" r="6.500" fill="none" stroke="currentColor" /><path d="M0 4v7l3-3.500zM26 4v7l-3-3.500z" />
            <circle cx="9" cy="8" r="1" /><circle cx="17" cy="8" r="1" /><circle cx="13" cy="11" r="1" /><circle cx="10" cy="10.500" r="1" /><circle cx="16" cy="10.500" r="1" />
          </Icon>
          <span className="leading-[16px]">MIDI</span>
        </div>
        <div className="flex w-[60px] flex-col items-center gap-[2px] pt-2 text-[11px] text-[#999]">
          <div className="h-[5px] w-[65px] bg-[#30353a]"><div className="h-full w-4 bg-[#4aa8d8]" /></div>
          <div className="h-[5px] w-[65px] bg-[#30353a]" />
          <span className="leading-[14px]">Performance</span>
        </div>
        <div className="grid w-[54px] place-items-center">
          <Icon w={24} h={24}><circle cx="12" cy="12" r="10" fill="none" stroke="#999" strokeWidth="3" strokeDasharray="2 3.200" /></Icon>
        </div>
        <div className="w-[63px] pt-[6px] leading-4 text-[#ddd]"><span className="text-[13px]">44.1 kHz</span><br />3.9 ms</div>
        <Readout value="7:03 days" label="Record Max" className="w-[66px]" />
        <Readout value="00:00:53.929" label="Seconds" className="w-[120px]" />
        <div className="flex w-[159px] flex-col items-center">
          <span className="h-6 text-[19px] leading-[26px] text-[#ddd]">00029.02.02.01</span>
          <span className="text-[11px] leading-[14px] text-[#888]">Bars</span>
        </div>
        <div className="ml-[2px] flex text-[#bbb]">
          <Wind label="Previous bar" className="w-6" w={10} d="M10 0v12L0 6z" />
          <Wind label="Rewind" className="w-7" w={20} d="M10 0v12L0 6zM20 0v12l-10-6z" />
          <Wind label="Forward" className="w-8" w={20} d="M0 0v12l10-6zM10 0v12l10-6z" />
          <Wind label="Next bar" className="w-[22px]" w={10} d="M0 0v12l10-6z" />
          <Wind label="Return to zero" className="w-7" w={13} d="M0 0h2v12H0zM13 0v12L3 6z" />
          <button aria-label="Stop" className="grid w-[42px] place-items-center"><span className="h-5 w-5 bg-[#35b3da]" /></button>
          <button aria-label="Play" className="grid w-8 place-items-center"><Icon w={17} h={20}><path d="M0 0v20l17-10z" /></Icon></button>
          <button aria-label="Record" className="grid w-9 place-items-center"><Icon w={20} h={20}><circle cx="10" cy="10" r="10" /></Icon></button>
          <button aria-label="Loop" className="grid w-12 place-items-center text-[#35b3da]">
            <Icon w={32} h={22}><path d="M6 19C0 16 0 3 9 2.500h14c9 .5 9 13.500 3 16.500h-6q3-1 4-7M6 19h6q3-1 4-7" fill="none" stroke="currentColor" strokeWidth="2" /></Icon>
          </button>
        </div>
        <div className="ml-2 grid w-[106px] grid-cols-[14px_1fr] content-center text-[13px] leading-4 text-[#ddd]">
          <span className="text-[#5a8296]">L</span><span>00005.01.01.00</span>
          <span className="text-[#5a8296]">R</span><span>00057.01.01.00</span>
        </div>
        <div className="ml-5 grid w-12 grid-cols-2 place-items-center pt-1 text-[#aaa]">
          <Icon w={15} h={8}><path d="M0 1h5l5 5h5M8 2h4" fill="none" stroke="currentColor" /></Icon>
          <Icon w={15} h={9}><path d="M1 0h1v9H1zM5 0h1v9H5zM2 4h13v1H2zM9 2h5v5H9z" /></Icon>
          <Icon w={11} h={11}><circle cx="5.500" cy="5.500" r="3" fill="none" stroke="currentColor" strokeWidth="2" /><circle cx="5.500" cy="5.500" r="4.500" fill="none" stroke="currentColor" strokeWidth="1.500" strokeDasharray="1.700 1.830" /></Icon>
          <Icon w={16} h={9}><path d="M2 0h1v9H2zM13 0h1v9h-1zM0 4h16v1H0zM5 2h6v5H5z" /></Icon>
        </div>
        <div className="ml-1 flex w-[68px] flex-col items-center text-[11px] text-[#888]">
          <div className="flex h-6 items-center gap-[10px] pt-1 text-[#999]">
            <Icon w={10} h={10}><circle cx="5" cy="5" r="4.500" /></Icon>
            <Icon w={11} h={11}><path d="M0 3l2 1 1-2-1-2a3 3 0 0 1 4 4l5 5-2 2-5-5a3 3 0 0 1-4-3z" /></Icon>
            <Icon w={11} h={11}><path d="M3 0h3l4 11H0zM4 7l5-6h2L6 8z" /></Icon>
          </div>
          <span className="leading-[14px]">Metronome</span>
        </div>
        <Readout value="4 / 4" label="Timing" className="w-14" />
        <Readout value="-" label="Key" className="w-[34px]" />
        <Readout value="126.00" label="Tempo" className="w-[59px]" />
        <div className="ml-2 flex flex-col gap-px pt-2">
          <div className="h-[5px] w-[67px] bg-[#363b40]" />
          <div className="h-[5px] w-[67px] bg-[#363b40]" />
          <div className="mt-[5px] flex items-center gap-2">
            <div className="h-2 w-[67px] bg-[repeating-linear-gradient(90deg,#4a94bd_0_1px,#2b5f7c_1px_2px)]"><div className="ml-auto h-full w-3 bg-[#363b40]" /></div>
            <Icon w={17} h={10} className="text-[#4fb5d6]"><circle cx="5" cy="5" r="5" /><circle cx="12" cy="5" r="4" fill="none" stroke="currentColor" strokeWidth="2" /></Icon>
          </div>
        </div>
      </div>
      <div className="flex-1" />
      <div className="flex text-[12px] text-[#eee]">
        <button className="w-14 border-l border-[#4a4a4a]">Edit</button>
        <button className="w-14 border-l border-[#4a4a4a]">Mix</button>
        <button className="w-[66px] border-l border-[#4a4a4a]">Browse</button>
      </div>
    </footer>
  );
}

function Taskbar() {
  return (
    <div className="flex h-10 shrink-0 bg-[linear-gradient(90deg,#050505,#0a0a0a_33%,#0b1116_48%,#080808_75%)] font-[Roboto,sans-serif] text-[12px] text-white">
      <button aria-label="Start menu" className="grid w-12 place-items-center"><Icon w={16} h={16}><path d="M0 2.200l6.500-.9v6.200H0zM7.500 1.200L16 0v7.500H7.500zM0 8.500h6.500v6.200L0 13.800zM7.500 8.500H16V16l-8.500-1.200z" /></Icon></button>
      <button aria-label="Search" className="grid w-[55px] place-items-center pr-2"><Icon w={17} h={17}><circle cx="10.500" cy="6" r="5" fill="none" stroke="currentColor" strokeWidth="1.500" /><path d="M7 10L1 16" stroke="currentColor" strokeWidth="1.500" /></Icon></button>
      <button aria-label="Chrome" className="grid w-10 place-items-center border-b-2 border-[#4ce04c] bg-[linear-gradient(90deg,#2d6b28_15px,#2a2a2a_15px)]">
        <svg width="24" height="24" viewBox="0 0 24 24" aria-hidden="true">
          <circle cx="12" cy="12" r="12" fill="#fbc116" />
          <path d="M12 12L1.600 6A12 12 0 0 1 22.400 6z" fill="#de4a3c" />
          <path d="M12 12L1.600 6A12 12 0 0 0 12 24l5.200-9z" fill="#19a05e" />
          <circle cx="12" cy="12" r="5.500" fill="#fff" /><circle cx="12" cy="12" r="4.300" fill="#4a87ee" />
        </svg>
      </button>
      <button aria-label="File manager" className="ml-[9px] grid w-10 place-items-center border-b-2 border-[#76b9ed]">
        <svg width="24" height="24" viewBox="0 0 24 24" aria-hidden="true">
          <path d="M0 0h22l2 2v22H0z" fill="#1d3fbf" /><path d="M6 0h12v8H6z" fill="#cdd4dc" /><path d="M13 1h3v6h-3z" fill="#1d3fbf" />
          <path d="M3 11h18v13H3z" fill="#fff" /><path d="M3 13.500h18M3 17h18" stroke="#f4a9a9" strokeWidth="1.500" />
        </svg>
      </button>
      <button aria-label="WhatsApp" className="ml-2 grid w-[41px] place-items-center border-b-2 border-[#76b9ed]">
        <svg width="25" height="25" viewBox="0 0 25 25" aria-hidden="true">
          <path d="M0 25l2-6.500A12 12 0 1 1 7 23z" fill="#fff" /><path d="M2.500 22.500l1.300-4.500A10 10 0 1 1 7.500 21z" fill="#25c351" />
          <path d="M8 6.500l2-.5 1.500 3.500-1.200 1.500c1 2 2 3 4 4l1.500-1.500 3.200 1.700c0 3-3 3.800-5 3-4-1.500-7-5-7.500-8-.1-1.500.5-3 1.500-3.700z" fill="#fff" />
        </svg>
      </button>
      <button aria-label="Studio One" className="ml-[5px] grid w-12 place-items-center border-b-2 border-[#76b9ed] bg-[#3c3c3c]"><Logo className="h-[22px] w-[22px]" /></button>
      <div className="flex-1" />
      <div className="flex items-center">
        <Icon w={12} h={7} className="mr-[10px]"><path d="M1 6.500l5-5 5 5" fill="none" stroke="currentColor" strokeWidth="1.500" /></Icon>
        <Icon w={17} h={15} className="mr-2"><path d="M4 2.500h12.500v8H3V6M1 .500h4v5H1zM9.500 10.500v3M6 13.500h7" fill="none" stroke="currentColor" /></Icon>
        <Icon w={17} h={14} className="mr-[10px]"><path d="M1 5h2l3-3v10L3 9H1zM8.500 5q1.500 2 0 4M11 3q3 4 0 8M13.500 1q4.500 6 0 12" fill="none" stroke="currentColor" /></Icon>
        <span className="w-[23px]">РУС</span>
        <div className="w-[79px] pl-1 text-center leading-[18px]">21:06<br />19.12.2018</div>
        <Icon w={17} h={16} className="mx-[5px]"><path d="M.5.5h16v12h-5l-3 3-3-3h-5z" fill="none" stroke="currentColor" /></Icon>
        <div className="ml-[13px] h-full w-[5px] border-l border-[#555]" />
      </div>
    </div>
  );
}

export default function App() {
  return (
    <div className="flex h-screen flex-col overflow-hidden bg-[#505050] font-['Liberation_Sans',Arial,sans-serif] text-black">
      <div className="shrink-0 font-[Roboto,sans-serif]">
        <TitleBar />
        <MenuBar />
      </div>
      <Toolbar />
      <main className="flex min-h-0 flex-1">
        <Inspector />
        <Arrange />
      </main>
      <TransportBar />
      <Taskbar />
    </div>
  );
}
